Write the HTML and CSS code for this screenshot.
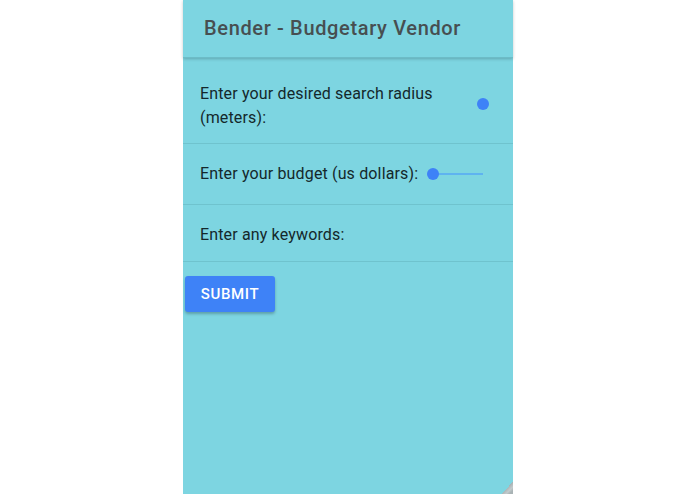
FILE: index.html
```html
<!DOCTYPE html>
<html lang="en">
  <head>
    <meta charset="UTF-8" />
    <meta name="viewport" content="width=device-width, initial-scale=1.0" />
    <title>Bender</title>
    <link rel="stylesheet" href="styles.css">
  </head>
  <body>
    <div class="app">
      <div class="toolbar">Bender - Budgetary Vendor</div>
      <ul class="form">
        <li class="row tall">
          <span class="label">Enter your desired search radius (meters):</span>
          <span class="slider empty"><i class="knob"></i></span>
        </li>
        <li class="row">
          <span class="label">Enter your budget (us dollars):</span>
          <span class="slider"><i class="knob"></i></span>
        </li>
        <li class="row">
          <span class="label">Enter any keywords:</span>
        </li>
      </ul>
      <button class="submit">SUBMIT</button>
      <div class="grip"></div>
    </div>
  </body>
</html>
```

FILE: styles.css
```css
* {
  margin: 0;
  padding: 0;
  box-sizing: border-box;
}
html, body {
  height: 100%;
  background: #fff;
}
body {
  font-family: Roboto, "Liberation Sans", sans-serif;
}
ul {
  list-style: none;
}
.app {
  position: relative;
  width: 330px;
  height: 494px;
  margin-left: 183px;
  background: #7dd5e1;
}
.toolbar {
  height: 58px;
  padding: 16px 0 0 21px;
  font-size: 20px;
  font-weight: 500;
  letter-spacing: 0.65px;
  color: #474f51;
  box-shadow: 0 1px 3px rgba(0, 0, 0, 0.22);
  border-bottom: 1px solid #6cbcc7;
}
.row {
  display: flex;
  align-items: center;
  padding: 0 17px;
  height: 61px;
  border-bottom: 1px solid #6fc3ce;
  font-size: 16px;
  line-height: 24px;
  letter-spacing: 0.15px;
  color: #14282b;
}
.row.tall {
  height: 86px;
  align-items: flex-start;
  padding-top: 24px;
}
.row:last-child {
  height: 57px;
  padding-top: 3px;
}
.row .label {
  max-width: 260px;
}
.row.tall .label {
  flex: 1;
  max-width: 265px;
}
.slider {
  position: relative;
  width: 50px;
  height: 2px;
  margin-left: 15px;
  background: #5fb3f0;
}
.slider.empty {
  width: 12px;
  margin: 21px 7px 0 auto;
  background: none;
}
.knob {
  position: absolute;
  left: -6px;
  top: -5px;
  width: 12px;
  height: 12px;
  border-radius: 50%;
  background: #3e82f7;
}
.slider.empty .knob {
  left: 0;
  top: -5px;
}
.submit {
  display: block;
  margin: 14px 0 0 2px;
  width: 90px;
  height: 36px;
  border: none;
  border-radius: 3px;
  background: #3e82f7;
  color: #fff;
  font-family: inherit;
  font-size: 15px;
  font-weight: 500;
  letter-spacing: 0.6px;
  box-shadow: 0 2px 3px rgba(0, 0, 0, 0.25);
}
.grip {
  position: absolute;
  right: 0;
  bottom: 0;
  width: 12px;
  height: 12px;
  background: linear-gradient(135deg, transparent 50%, #a9b3b5 50%, #c3cbcd 70%, #a9b3b5 85%);
}
```
